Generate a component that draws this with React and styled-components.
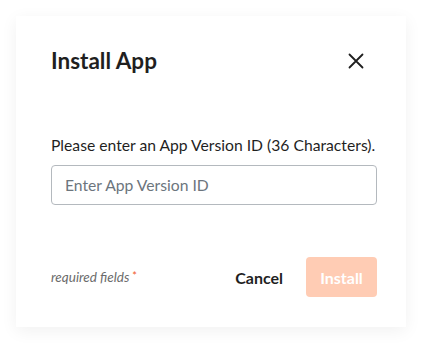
import React, { useState } from 'react';
import styled, { createGlobalStyle } from 'styled-components';

const GlobalStyle = createGlobalStyle`
  html, body {
    margin: 0;
    padding: 0;
    background: #ffffff;
  }
  body {
    font-family: Lato, "Liberation Sans", sans-serif;
    color: #1f1f1f;
  }
`;

const Page = styled.div`
  padding: 16px;
`;

const Dialog = styled.div`
  width: 390px;
  height: 311px;
  box-sizing: border-box;
  background: #ffffff;
  box-shadow: 0 4px 16px rgba(0, 0, 0, 0.06);
  padding: 35px 30px 0 35px;
  display: flex;
  flex-direction: column;
`;

const Header = styled.div`
  display: flex;
  align-items: center;
  justify-content: space-between;
  height: 20px;
`;

const Title = styled.h2`
  margin: 0;
  font-size: 22.5px;
  font-weight: 700;
  color: #1f1f1f;
  line-height: 20px;
`;

const CloseButton = styled.button`
  border: 0;
  background: none;
  padding: 0;
  margin-right: 12px;
  width: 16px;
  height: 16px;
  display: flex;
  cursor: pointer;
`;

const Body = styled.div`
  margin-top: 64px;
  width: 326px;
`;

const Label = styled.label`
  display: block;
  font-size: 15.7px;
  line-height: 20px;
  white-space: nowrap;
  color: #1f1f1f;
`;

const Input = styled.input`
  display: block;
  margin-top: 10px;
  width: 100%;
  height: 40px;
  box-sizing: border-box;
  border: 1px solid #b4b9be;
  border-radius: 4px;
  padding: 0 13px;
  font-family: inherit;
  font-size: 15.7px;
  color: #1f1f1f;
  outline: none;

  &::placeholder {
    color: #6c757d;
  }
`;

const Footer = styled.div`
  margin-top: 52px;
  width: 326px;
  display: flex;
  align-items: center;
`;

const Required = styled.span`
  font-size: 13.5px;
  font-style: italic;
  color: #6b6b6b;
  flex: 1;
`;

const Star = styled.span`
  color: #f05a28;
  font-style: normal;
  margin-left: 3px;
  vertical-align: 2px;
  font-size: 11px;
`;

const TextButton = styled.button`
  border: 0;
  background: none;
  padding: 0;
  font-family: inherit;
  font-size: 16px;
  font-weight: 700;
  color: #1f1f1f;
  cursor: pointer;
  margin-right: 23px;
`;

const PrimaryButton = styled.button`
  border: 0;
  border-radius: 4px;
  height: 40px;
  width: 71px;
  background: ${props => (props.disabled ? '#ffccb4' : '#ff6a2a')};
  color: #ffffff;
  font-family: inherit;
  font-size: 16px;
  font-weight: 700;
  cursor: ${props => (props.disabled ? 'default' : 'pointer')};
`;

const CloseIcon = () => (
  <svg width="16" height="16" viewBox="0 0 16 16">
    <path d="M1.5 1.5 L14.5 14.5 M14.5 1.5 L1.5 14.5" stroke="#1f1f1f" strokeWidth="1.8" strokeLinecap="round" />
  </svg>
);

const App = () => {
  const [versionId, setVersionId] = useState('');

  return (
    <Page>
      <GlobalStyle />
      <Dialog>
        <Header>
          <Title>Install App</Title>
          <CloseButton aria-label="Close">
            <CloseIcon />
          </CloseButton>
        </Header>
        <Body>
          <Label htmlFor="version-id">Please enter an App Version ID (36 Characters).</Label>
          <Input
            id="version-id"
            placeholder="Enter App Version ID"
            value={versionId}
            onChange={e => setVersionId(e.target.value)}
          />
        </Body>
        <Footer>
          <Required>
            required fields<Star>*</Star>
          </Required>
          <TextButton>Cancel</TextButton>
          <PrimaryButton disabled={versionId.length !== 36}>Install</PrimaryButton>
        </Footer>
      </Dialog>
    </Page>
  );
};

export default App;
